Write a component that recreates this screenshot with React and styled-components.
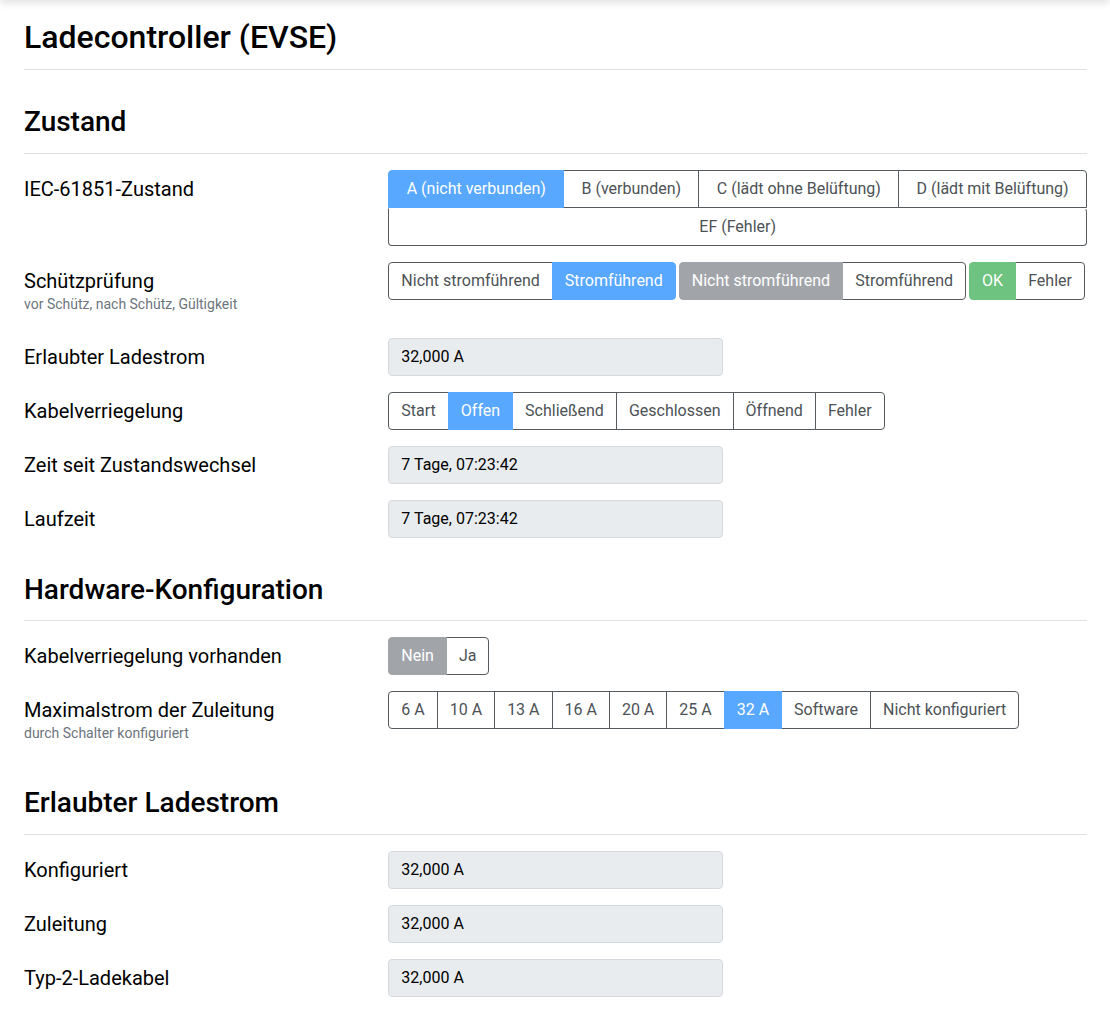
import styled, { createGlobalStyle } from "styled-components";

const GlobalStyle = createGlobalStyle`
  html, body {
    margin: 0;
    padding: 0;
    background: #ffffff;
    font-family: Roboto, "Liberation Sans", sans-serif;
    color: #212529;
  }
  * {
    box-sizing: border-box;
  }
`;

const iecStates = [
  { label: "A (nicht verbunden)", active: true },
  { label: "B (verbunden)" },
  { label: "C (lädt ohne Belüftung)" },
  { label: "D (lädt mit Belüftung)" },
];

const lockStates = ["Start", "Offen", "Schließend", "Geschlossen", "Öffnend", "Fehler"];
const currents = ["6 A", "10 A", "13 A", "16 A", "20 A", "25 A", "32 A", "Software", "Nicht konfiguriert"];

function Group({ items, active, variant = "primary", stretch }) {
  return (
    <BtnGroup $stretch={stretch}>
      {items.map((item) => (
        <Btn
          key={item}
          $active={item === active}
          $variant={variant}
          $stretch={stretch}
        >
          {item}
        </Btn>
      ))}
    </BtnGroup>
  );
}

function Row({ label, hint, children }) {
  return (
    <FormRow>
      <Label>
        {label}
        {hint && <Hint>{hint}</Hint>}
      </Label>
      <Control>{children}</Control>
    </FormRow>
  );
}

export default function App() {
  return (
    <>
      <GlobalStyle />
      <TopShadow />
      <Page>
        <Title>Ladecontroller (EVSE)</Title>

        <Section>
          <SectionTitle>Zustand</SectionTitle>
          <Row label="IEC-61851-Zustand">
            <Stack>
              <BtnGroup $stretch $flatBottom>
                {iecStates.map((s) => (
                  <Btn key={s.label} $active={s.active} $variant="primary" $stretch>
                    {s.label}
                  </Btn>
                ))}
              </BtnGroup>
              <ErrorBtn>EF (Fehler)</ErrorBtn>
            </Stack>
          </Row>
          <Row label="Schützprüfung" hint="vor Schütz, nach Schütz, Gültigkeit">
            <Groups>
              <Group items={["Nicht stromführend", "Stromführend"]} active="Stromführend" />
              <Group
                items={["Nicht stromführend", "Stromführend"]}
                active="Nicht stromführend"
                variant="secondary"
              />
              <Group items={["OK", "Fehler"]} active="OK" variant="success" />
            </Groups>
          </Row>
          <Row label="Erlaubter Ladestrom">
            <Output>32,000 A</Output>
          </Row>
          <Row label="Kabelverriegelung">
            <Group items={lockStates} active="Offen" />
          </Row>
          <Row label="Zeit seit Zustandswechsel">
            <Output>7 Tage, 07:23:42</Output>
          </Row>
          <Row label="Laufzeit">
            <Output>7 Tage, 07:23:42</Output>
          </Row>
        </Section>

        <Section>
          <SectionTitle>Hardware-Konfiguration</SectionTitle>
          <Row label="Kabelverriegelung vorhanden">
            <Group items={["Nein", "Ja"]} active="Nein" variant="secondary" />
          </Row>
          <Row label="Maximalstrom der Zuleitung" hint="durch Schalter konfiguriert">
            <Group items={currents} active="32 A" />
          </Row>
        </Section>

        <Section>
          <SectionTitle>Erlaubter Ladestrom</SectionTitle>
          <Row label="Konfiguriert">
            <Output>32,000 A</Output>
          </Row>
          <Row label="Zuleitung">
            <Output>32,000 A</Output>
          </Row>
          <Row label="Typ-2-Ladekabel">
            <Output>32,000 A</Output>
          </Row>
        </Section>
      </Page>
    </>
  );
}

const TopShadow = styled.div`
  position: fixed;
  top: -4px;
  left: 0;
  right: 0;
  height: 4px;
  box-shadow: 0 0 10px rgba(0, 0, 0, 0.3);
  z-index: 10;
`;

const Page = styled.main`
  padding: 0 23px 0 24px;
`;

const Title = styled.h1`
  margin: 0 0 16px 0;
  padding: 18px 0 13px 0;
  font-size: 32px;
  font-weight: 500;
  line-height: 1.2;
  color: #000;
  border-bottom: 1px solid #dee2e6;
`;

const Section = styled.section`
  padding-top: 18px;
`;

const SectionTitle = styled.h2`
  margin: 0 0 16px 0;
  padding: 1px 0 14px 0;
  font-size: 28px;
  font-weight: 500;
  line-height: 1.2;
  color: #000;
  border-bottom: 1px solid #dee2e6;
`;

const FormRow = styled.div`
  display: grid;
  grid-template-columns: calc((100% + 30px) / 3 - 30px) 1fr;
  column-gap: 30px;
  margin: 0 0 16px 0;
`;

const Label = styled.div`
  padding: 4px 0;
  font-size: 20px;
  line-height: 30px;
  color: #000;
`;

const Hint = styled.small`
  display: block;
  margin-bottom: 5px;
  font-size: 14px;
  line-height: 1.2;
  color: #6c757d;
`;

const Control = styled.div`
  display: flex;
  align-items: flex-start;
  min-width: 0;
`;

const Stack = styled.div`
  display: flex;
  flex-direction: column;
  width: 100%;
`;

const Groups = styled.div`
  display: flex;
  gap: 3px;
`;

const BtnGroup = styled.div`
  display: ${(p) => (p.$stretch ? "flex" : "inline-flex")};
  width: ${(p) => (p.$stretch ? "100%" : "auto")};

  & > button:first-child {
    border-top-left-radius: 4px;
    border-bottom-left-radius: ${(p) => (p.$flatBottom ? "0" : "4px")};
  }
  & > button:last-child {
    border-top-right-radius: 4px;
    border-bottom-right-radius: ${(p) => (p.$flatBottom ? "0" : "4px")};
  }
  & > button + button {
    margin-left: -1px;
  }
`;

const colors = {
  primary: "#58a8ff",
  secondary: "#a1a5aa",
  success: "#6ec380",
};

const Btn = styled.button`
  flex: ${(p) => (p.$stretch ? "1 1 auto" : "0 0 auto")};
  margin: 0;
  padding: 6px 12px;
  font-family: Roboto, "Liberation Sans", sans-serif;
  font-size: 16px;
  line-height: 24px;
  white-space: nowrap;
  border-radius: 0;
  border: 1px solid ${(p) => (p.$active ? colors[p.$variant] : "#555a5e")};
  background: ${(p) => (p.$active ? colors[p.$variant] : "#ffffff")};
  color: ${(p) => (p.$active ? "#ffffff" : "#4d5256")};
  position: relative;
  z-index: ${(p) => (p.$active ? 1 : 0)};
`;

const ErrorBtn = styled.button`
  width: 100%;
  margin: 0;
  padding: 6px 12px;
  font-family: Roboto, "Liberation Sans", sans-serif;
  font-size: 16px;
  line-height: 24px;
  color: #4d5256;
  background: #ffffff;
  border: 1px solid #555a5e;
  border-top-color: transparent;
  border-radius: 0 4px 4px 4px;
`;

const Output = styled.div`
  width: calc((100% + 30px) / 2 - 30px);
  height: 38px;
  padding: 6px 12px;
  font-size: 16px;
  line-height: 24px;
  color: #000;
  background: #e9ecef;
  border: 1px solid #d6dadf;
  border-radius: 4px;
`;
